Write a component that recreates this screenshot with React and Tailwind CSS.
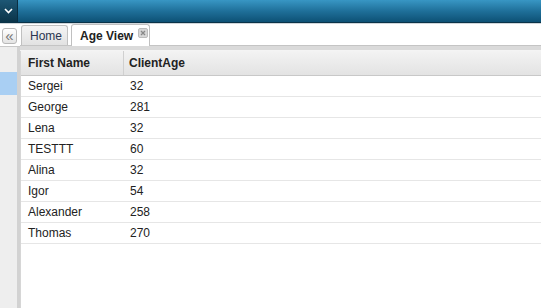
// Age View screen: top bar, collapsible side strip, tab strip, client grid
const ROWS = [
  { name: 'Sergei', age: 32 },
  { name: 'George', age: 281 },
  { name: 'Lena', age: 32 },
  { name: 'TESTTT', age: 60 },
  { name: 'Alina', age: 32 },
  { name: 'Igor', age: 54 },
  { name: 'Alexander', age: 258 },
  { name: 'Thomas', age: 270 },
];

export default function App() {
  return (
    <div className="w-[541px] h-[308px] overflow-hidden flex flex-col bg-white text-[12px] text-[#222] font-['Liberation_Sans',Arial,sans-serif]">

      {/* ── Top bar ─────────────────────────────── */}
      <div className="h-[23px] flex shrink-0 border-b border-[#0a3348]">
        <div className="w-[18px] flex items-center justify-center bg-gradient-to-b from-[#1d5775] to-[#0b3449] border-r border-[#0a2f42]">
          <svg width="9" height="6" viewBox="0 0 9 6">
            <path d="M1 1 L4.5 4.5 L8 1" stroke="#fff" strokeWidth="1.6" fill="none" />
          </svg>
        </div>
        <div className="flex-1 bg-gradient-to-b from-[#3896c4] via-[#1f709a] to-[#0d5175]" />
      </div>
      <div className="h-px bg-[#d0d6da] shrink-0" />

      <div className="flex-1 flex min-h-0">
        {/* ── Side strip ────────────────────────── */}
        <div className="w-[20px] flex flex-col shrink-0">
          <div className="h-[22px] bg-white flex items-start pt-[4px] pl-[2px]">
            <div className="w-[15px] h-[16px] rounded-[3px] border border-[#b8b8b8] bg-gradient-to-b from-white to-[#e4e4e4] flex items-center justify-center text-[#777] text-[15px] leading-none pb-[2px]">
              «
            </div>
          </div>
          <div className="flex-1 flex border-t border-[#c8c8c8]">
            <div className="flex-1 bg-[#eeeeee] flex flex-col">
              <div className="h-[25px]" />
              <div className="h-[23px] bg-[#a9cff3]" />
            </div>
            <div className="w-[3px] bg-[#d2d2d2]" />
          </div>
        </div>

        {/* ── Main panel ────────────────────────── */}
        <div className="flex-1 flex flex-col min-w-0">
          {/* Tabs */}
          <div className="h-[22px] flex items-end gap-[3px] pl-[1px] shrink-0 border-b border-[#c4c4c4]">
            <div className="h-[20px] w-[47px] shrink-0 rounded-t-[3px] border border-b-0 border-[#c0c0c0] bg-gradient-to-b from-[#f4f4f4] to-[#e2e2e2] flex items-center pl-[8px] text-[#2a3550]">
              Home
            </div>
            <div className="h-[22px] w-[79px] shrink-0 whitespace-nowrap rounded-t-[3px] border border-b-0 border-[#c0c0c0] bg-white flex items-center pl-[8px] gap-[5px] font-bold text-[#222] -mb-px">
              Age View
              <span className="w-[10px] h-[10px] mb-[6px] rounded-[2px] bg-[#d6d6d6] border border-[#bcbcbc] flex items-center justify-center">
                <svg width="6" height="6" viewBox="0 0 6 6">
                  <path d="M1 1 L5 5 M5 1 L1 5" stroke="#888" strokeWidth="1.3" />
                </svg>
              </span>
            </div>
          </div>
          <div className="h-[5px] bg-[#dadada] border-b border-[#f4f4f4] shrink-0" />

          {/* Grid */}
          <div className="flex-1 border-l border-[#d6d6d6]">
            <div className="h-[25px] flex bg-gradient-to-b from-[#f3f3f3] to-[#e3e3e3] border-b border-[#c8c8c8] font-bold">
              <div className="w-[103px] border-r border-[#d0d0d0] flex items-center pl-[7px]">First Name</div>
              <div className="flex-1 flex items-center pl-[5px]">ClientAge</div>
            </div>
            {ROWS.map((r) => (
              <div key={r.name} className="h-[21px] flex items-center border-b border-[#e6e6e6]">
                <div className="w-[103px] pl-[7px]">{r.name}</div>
                <div className="flex-1 pl-[6px]">{r.age}</div>
              </div>
            ))}
          </div>
        </div>
      </div>
    </div>
  );
}
